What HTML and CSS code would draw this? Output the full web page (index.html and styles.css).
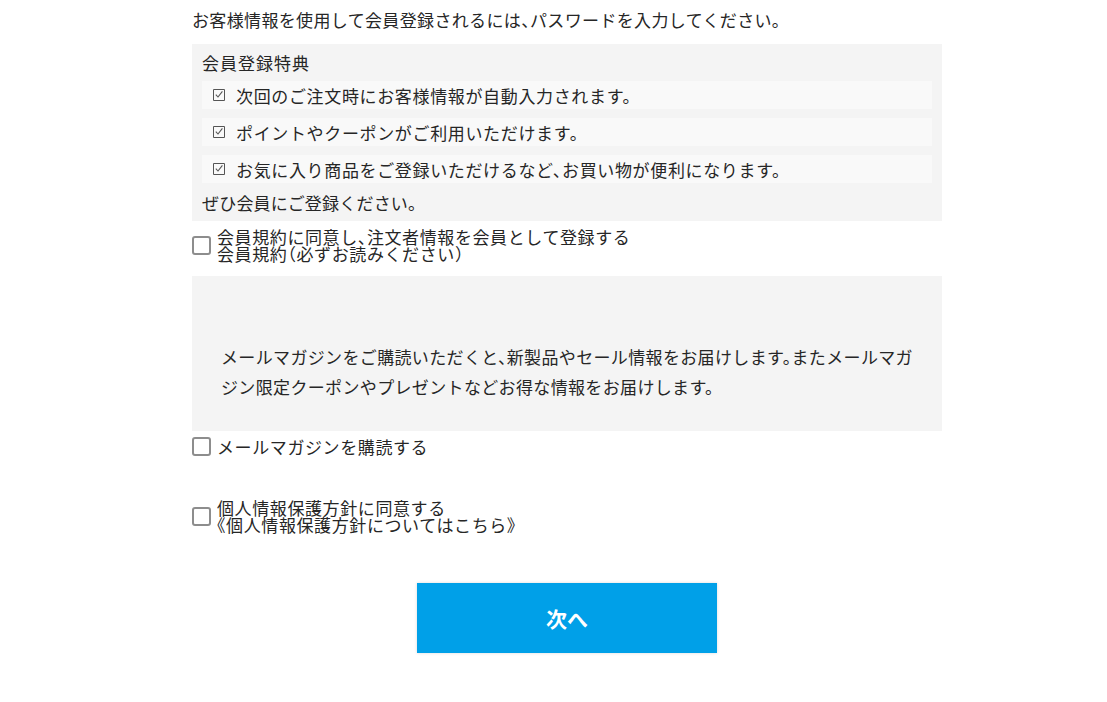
FILE: index.html
```html
<!DOCTYPE html>
<html lang="ja">
<head>
    <meta charset="UTF-8">
    <meta name="viewport" content="width=device-width, initial-scale=1.0">
    <title>会員登録</title>
    <link rel="stylesheet" href="styles.css">
</head>
<body>
    <div class="container">
        <p class="intro">お客様情報を使用して会員登録されるには、パスワードを入力してください。</p>

        <div class="benefits">
            <p class="benefits-title">会員登録特典</p>
            <ul class="benefit-list">
                <li class="benefit-item">
                    <svg class="check-icon" viewBox="0 0 12 12" aria-hidden="true"><path d="M0.5 0.5h11v11h-11z" fill="none" stroke="#555" stroke-width="1"/><path d="M2.8 5.6l2.2 2.4 4.4-5.6" fill="none" stroke="#555" stroke-width="1.1"/></svg>
                    次回のご注文時にお客様情報が自動入力されます。
                </li>
                <li class="benefit-item">
                    <svg class="check-icon" viewBox="0 0 12 12" aria-hidden="true"><path d="M0.5 0.5h11v11h-11z" fill="none" stroke="#555" stroke-width="1"/><path d="M2.8 5.6l2.2 2.4 4.4-5.6" fill="none" stroke="#555" stroke-width="1.1"/></svg>
                    ポイントやクーポンがご利用いただけます。
                </li>
                <li class="benefit-item">
                    <svg class="check-icon" viewBox="0 0 12 12" aria-hidden="true"><path d="M0.5 0.5h11v11h-11z" fill="none" stroke="#555" stroke-width="1"/><path d="M2.8 5.6l2.2 2.4 4.4-5.6" fill="none" stroke="#555" stroke-width="1.1"/></svg>
                    お気に入り商品をご登録いただけるなど、お買い物が便利になります。
                </li>
            </ul>
            <p class="benefits-foot">ぜひ会員にご登録ください。</p>
        </div>

        <label class="check-row check-row-terms">
            <input type="checkbox" class="checkbox">
            <span class="check-label">会員規約に同意し、注文者情報を会員として登録する<br>会員規約（必ずお読みください）</span>
        </label>

        <div class="mail-box">
            <p class="mail-text">メールマガジンをご購読いただくと、新製品やセール情報をお届けします。またメールマガジン限定クーポンやプレゼントなどお得な情報をお届けします。</p>
        </div>

        <label class="check-row check-row-mail">
            <input type="checkbox" class="checkbox">
            <span class="check-label">メールマガジンを購読する</span>
        </label>

        <label class="check-row check-row-privacy">
            <input type="checkbox" class="checkbox">
            <span class="check-label">個人情報保護方針に同意する<br>《個人情報保護方針についてはこちら》</span>
        </label>

        <div class="actions">
            <button type="button" class="next-button">次へ</button>
        </div>
    </div>
</body>
</html>
```

FILE: styles.css
```css
body {
    font-family: "Noto Sans CJK JP", "Noto Sans", sans-serif;
    font-size: 16px;
    font-feature-settings: "halt";
    color: #262626;
    background-color: #fff;
    margin: 0;
    padding: 0;
}
p {
    margin: 0;
}
.container {
    width: 750px;
    margin-left: 192px;
    padding-top: 8px;
}
.intro {
    font-size: 17px;
    letter-spacing: 0.35px;
    line-height: 24px;
    margin-bottom: 12px;
}
.benefits {
    background-color: #f4f4f4;
    padding: 7px 10px 6px;
}
.benefits-title {
    font-size: 17px;
    letter-spacing: 1px;
    line-height: 24px;
    margin-bottom: 6px;
}
.benefit-list {
    list-style: none;
    margin: 0;
    padding: 0;
}
.benefit-item {
    display: flex;
    align-items: center;
    height: 28px;
    padding-left: 11px;
    margin-bottom: 9px;
    background-color: #f9f9f9;
    font-size: 17px;
    letter-spacing: 0.65px;
}
.benefit-item:last-child {
    margin-bottom: 8px;
}
.check-icon {
    width: 12px;
    height: 12px;
    margin-right: 11px;
    flex-shrink: 0;
}
.benefits-foot {
    font-size: 17px;
    letter-spacing: 0.2px;
    line-height: 24px;
}
.check-row {
    display: flex;
    align-items: center;
    cursor: pointer;
}
.check-row-terms {
    margin-top: 7px;
}
.check-row-mail {
    margin-top: 5px;
}
.check-row-privacy {
    margin-top: 43px;
}
.checkbox {
    -webkit-appearance: none;
    appearance: none;
    width: 19px;
    height: 19px;
    margin: 1px 6px 0 0;
    border: 2px solid #8d8d8d;
    border-radius: 3px;
    background-color: #fff;
    flex-shrink: 0;
}
.checkbox:checked {
    background-color: #00a0e8;
    border-color: #00a0e8;
}
.check-label {
    font-size: 17px;
    line-height: 17px;
    letter-spacing: 0.6px;
}
.mail-box {
    background-color: #f4f4f4;
    margin-top: 14px;
    padding: 66px 27px 29px 29px;
}
.mail-text {
    font-size: 17px;
    line-height: 30px;
    letter-spacing: 0.35px;
}
.actions {
    display: flex;
    justify-content: center;
    margin-top: 50px;
    padding-bottom: 50px;
}
.next-button {
    width: 300px;
    height: 70px;
    border: none;
    background-color: #00a0e8;
    color: #fff;
    font-family: inherit;
    font-size: 21px;
    font-weight: bold;
    box-shadow: 0 0 3px rgba(0, 0, 0, 0.15);
    cursor: pointer;
}
.next-button:hover {
    background-color: #0090d2;
}
```
